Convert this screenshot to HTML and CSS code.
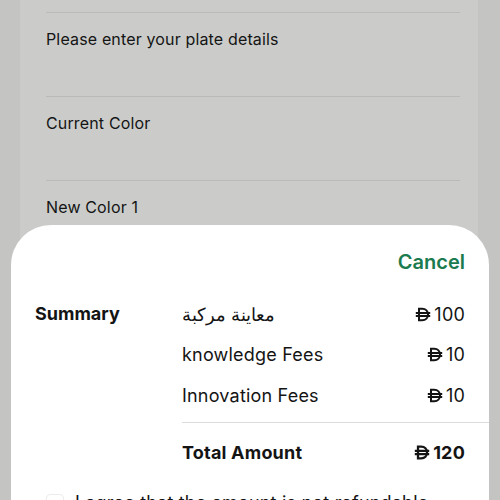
FILE: index.html
```html
<!DOCTYPE html>
<html lang="en">
<head>
    <meta charset="UTF-8">
    <meta name="viewport" content="width=device-width, initial-scale=1.0">
    <title>Change Vehicle Color</title>
    <link rel="stylesheet" href="styles.css">
</head>
<body>

<div class="page">
    <div class="form-list">
        <div class="form-row">Please enter your plate details</div>
        <div class="form-row">Current Color</div>
        <div class="form-row">New Color 1</div>
    </div>
</div>

<div class="sheet">
    <div class="sheet-head">
        <button class="cancel">Cancel</button>
    </div>

    <div class="summary">
        <div class="summary-title">Summary</div>
        <div class="summary-lines">
            <div class="line">
                <span class="line-name" dir="rtl">معاينة مركبة</span>
                <span class="amount"><svg class="dirham" viewBox="0 0 16 14"><path d="M4 1.2V12.8H7.2C10.8 12.8 13 10.4 13 7S10.8 1.2 7.2 1.2Z"/><path d="M0.8 5.4H15.2M0.8 8.6H15.2"/></svg>100</span>
            </div>
            <div class="line">
                <span class="line-name">knowledge Fees</span>
                <span class="amount"><svg class="dirham" viewBox="0 0 16 14"><path d="M4 1.2V12.8H7.2C10.8 12.8 13 10.4 13 7S10.8 1.2 7.2 1.2Z"/><path d="M0.8 5.4H15.2M0.8 8.6H15.2"/></svg>10</span>
            </div>
            <div class="line">
                <span class="line-name">Innovation Fees</span>
                <span class="amount"><svg class="dirham" viewBox="0 0 16 14"><path d="M4 1.2V12.8H7.2C10.8 12.8 13 10.4 13 7S10.8 1.2 7.2 1.2Z"/><path d="M0.8 5.4H15.2M0.8 8.6H15.2"/></svg>10</span>
            </div>
            <div class="line total">
                <span class="line-name">Total Amount</span>
                <span class="amount"><svg class="dirham" viewBox="0 0 16 14"><path d="M4 1.2V12.8H7.2C10.8 12.8 13 10.4 13 7S10.8 1.2 7.2 1.2Z"/><path d="M0.8 5.4H15.2M0.8 8.6H15.2"/></svg>120</span>
            </div>
        </div>
    </div>

    <label class="agree">
        <span class="check"></span>
        <span>I agree that the amount is not refundable</span>
    </label>
</div>

</body>
</html>
```

FILE: styles.css
```css
body {
    margin: 0;
    height: 500px;
    overflow: hidden;
    background-color: #c4c5c3;
    font-family: Inter, "Noto Sans", sans-serif;
    color: #141414;
}
.page {
    margin: 0 22px 0 20px;
    height: 100%;
    background-color: #cbccca;
}
.form-list {
    padding: 12px 18px 0 26px;
}
.form-row {
    height: 84px;
    box-sizing: border-box;
    border-top: 1px solid #babbb9;
    padding-top: 16px;
    font-size: 16px;
    line-height: 20px;
    letter-spacing: 0.15px;
}

/* bottom sheet sitting over the form */
.sheet {
    position: absolute;
    left: 11px;
    right: 11px;
    top: 225px;
    height: 320px;
    background-color: #fff;
    border-radius: 40px 40px 0 0;
    padding: 24px 24px 0 24px;
    box-sizing: border-box;
}
.sheet-head {
    display: flex;
    justify-content: flex-end;
}
.cancel {
    background: none;
    border: none;
    padding: 0;
    font-family: inherit;
    font-size: 20px;
    line-height: 26px;
    font-weight: 600;
    color: #1b7a4e;
    cursor: pointer;
}
.summary {
    display: grid;
    grid-template-columns: 147px 1fr;
    margin-top: 25px;
}
.summary-title {
    font-size: 18px;
    line-height: 24px;
    font-weight: 700;
    padding-top: 2px;
}
.line {
    display: flex;
    justify-content: space-between;
    align-items: center;
    height: 41px;
    font-size: 18px;
    letter-spacing: 0.2px;
}
.line:first-child {
    height: 28px;
    margin-bottom: 6px;
}
.line-name {
    display: block;
}
.line.total {
    margin-top: 6px;
    margin-right: -24px;
    padding-right: 24px;
    height: 54px;
    padding-top: 2px;
    border-top: 1px solid #dcdcdc;
    font-weight: 700;
}
.amount {
    display: flex;
    align-items: center;
    gap: 3px;
}
.dirham {
    width: 16px;
    height: 15px;
    fill: none;
    stroke: #141414;
    stroke-width: 2;
}
.total .dirham {
    stroke-width: 2.3;
}
.agree {
    display: flex;
    align-items: center;
    gap: 11px;
    margin-top: 13px;
    padding-left: 11px;
    font-size: 18px;
    letter-spacing: 0.2px;
}
.check {
    width: 18px;
    height: 18px;
    border: 1px solid #ececec;
    border-radius: 4px;
    box-sizing: border-box;
}
```
